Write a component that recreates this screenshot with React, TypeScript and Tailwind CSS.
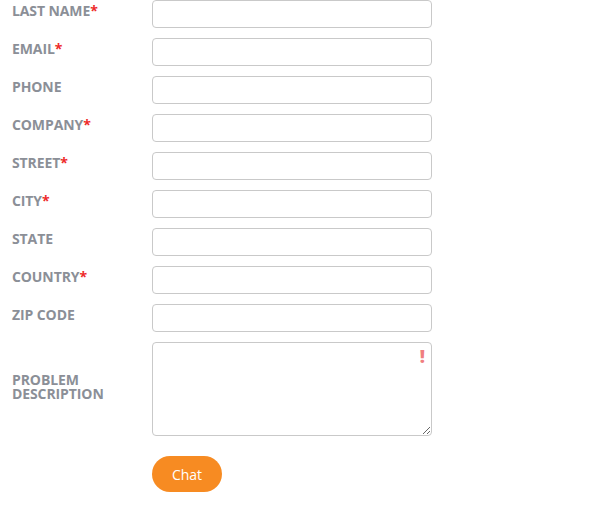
const fields = [
  { label: "LAST NAME", required: true },
  { label: "EMAIL", required: true },
  { label: "PHONE", required: false },
  { label: "COMPANY", required: true },
  { label: "STREET", required: true },
  { label: "CITY", required: true },
  { label: "STATE", required: false },
  { label: "COUNTRY", required: true },
  { label: "ZIP CODE", required: false },
];

export default function App() {
  return (
    <div
      className="min-h-[516px] w-[591px] bg-white pl-3"
      style={{ fontFamily: '"Open Sans", "Liberation Sans", sans-serif' }}
    >
      <form className="flex flex-col gap-[10px]" onSubmit={(e) => e.preventDefault()}>
        {fields.map((f) => (
          <div key={f.label} className="flex items-center">
            <label className="w-[140px] pb-[7px] text-[14px] font-bold leading-[16px] tracking-[-0.1px] text-[#8b8f97]">
              {f.label}
              {f.required && <span className="text-[#ee2b2b]">*</span>}
            </label>
            <input
              type="text"
              className="h-[28px] w-[280px] rounded-[4px] border border-[#c9c9c9] bg-white px-2 text-sm outline-none"
            />
          </div>
        ))}

        {/* textarea row */}
        <div className="flex items-center">
          <label className="w-[140px] pb-[4px] text-[14px] font-bold leading-[14px] tracking-[-0.1px] text-[#8b8f97]">
            PROBLEM
            <br />
            DESCRIPTION
          </label>
          <div className="relative">
            <textarea className="block h-[94px] w-[280px] rounded-[4px] border border-[#c9c9c9] bg-white px-2 py-1 text-sm outline-none" />
            <span className="absolute right-[7px] top-[4px] text-[18px] font-extrabold leading-[20px] text-[#f07f7f]">
              !
            </span>
          </div>
        </div>

        <div className="flex pl-[140px] pt-[10px]">
          <button
            type="submit"
            className="h-[36px] w-[70px] rounded-full bg-[#f78b22] text-[14px] text-white"
          >
            Chat
          </button>
        </div>
      </form>
    </div>
  );
}
